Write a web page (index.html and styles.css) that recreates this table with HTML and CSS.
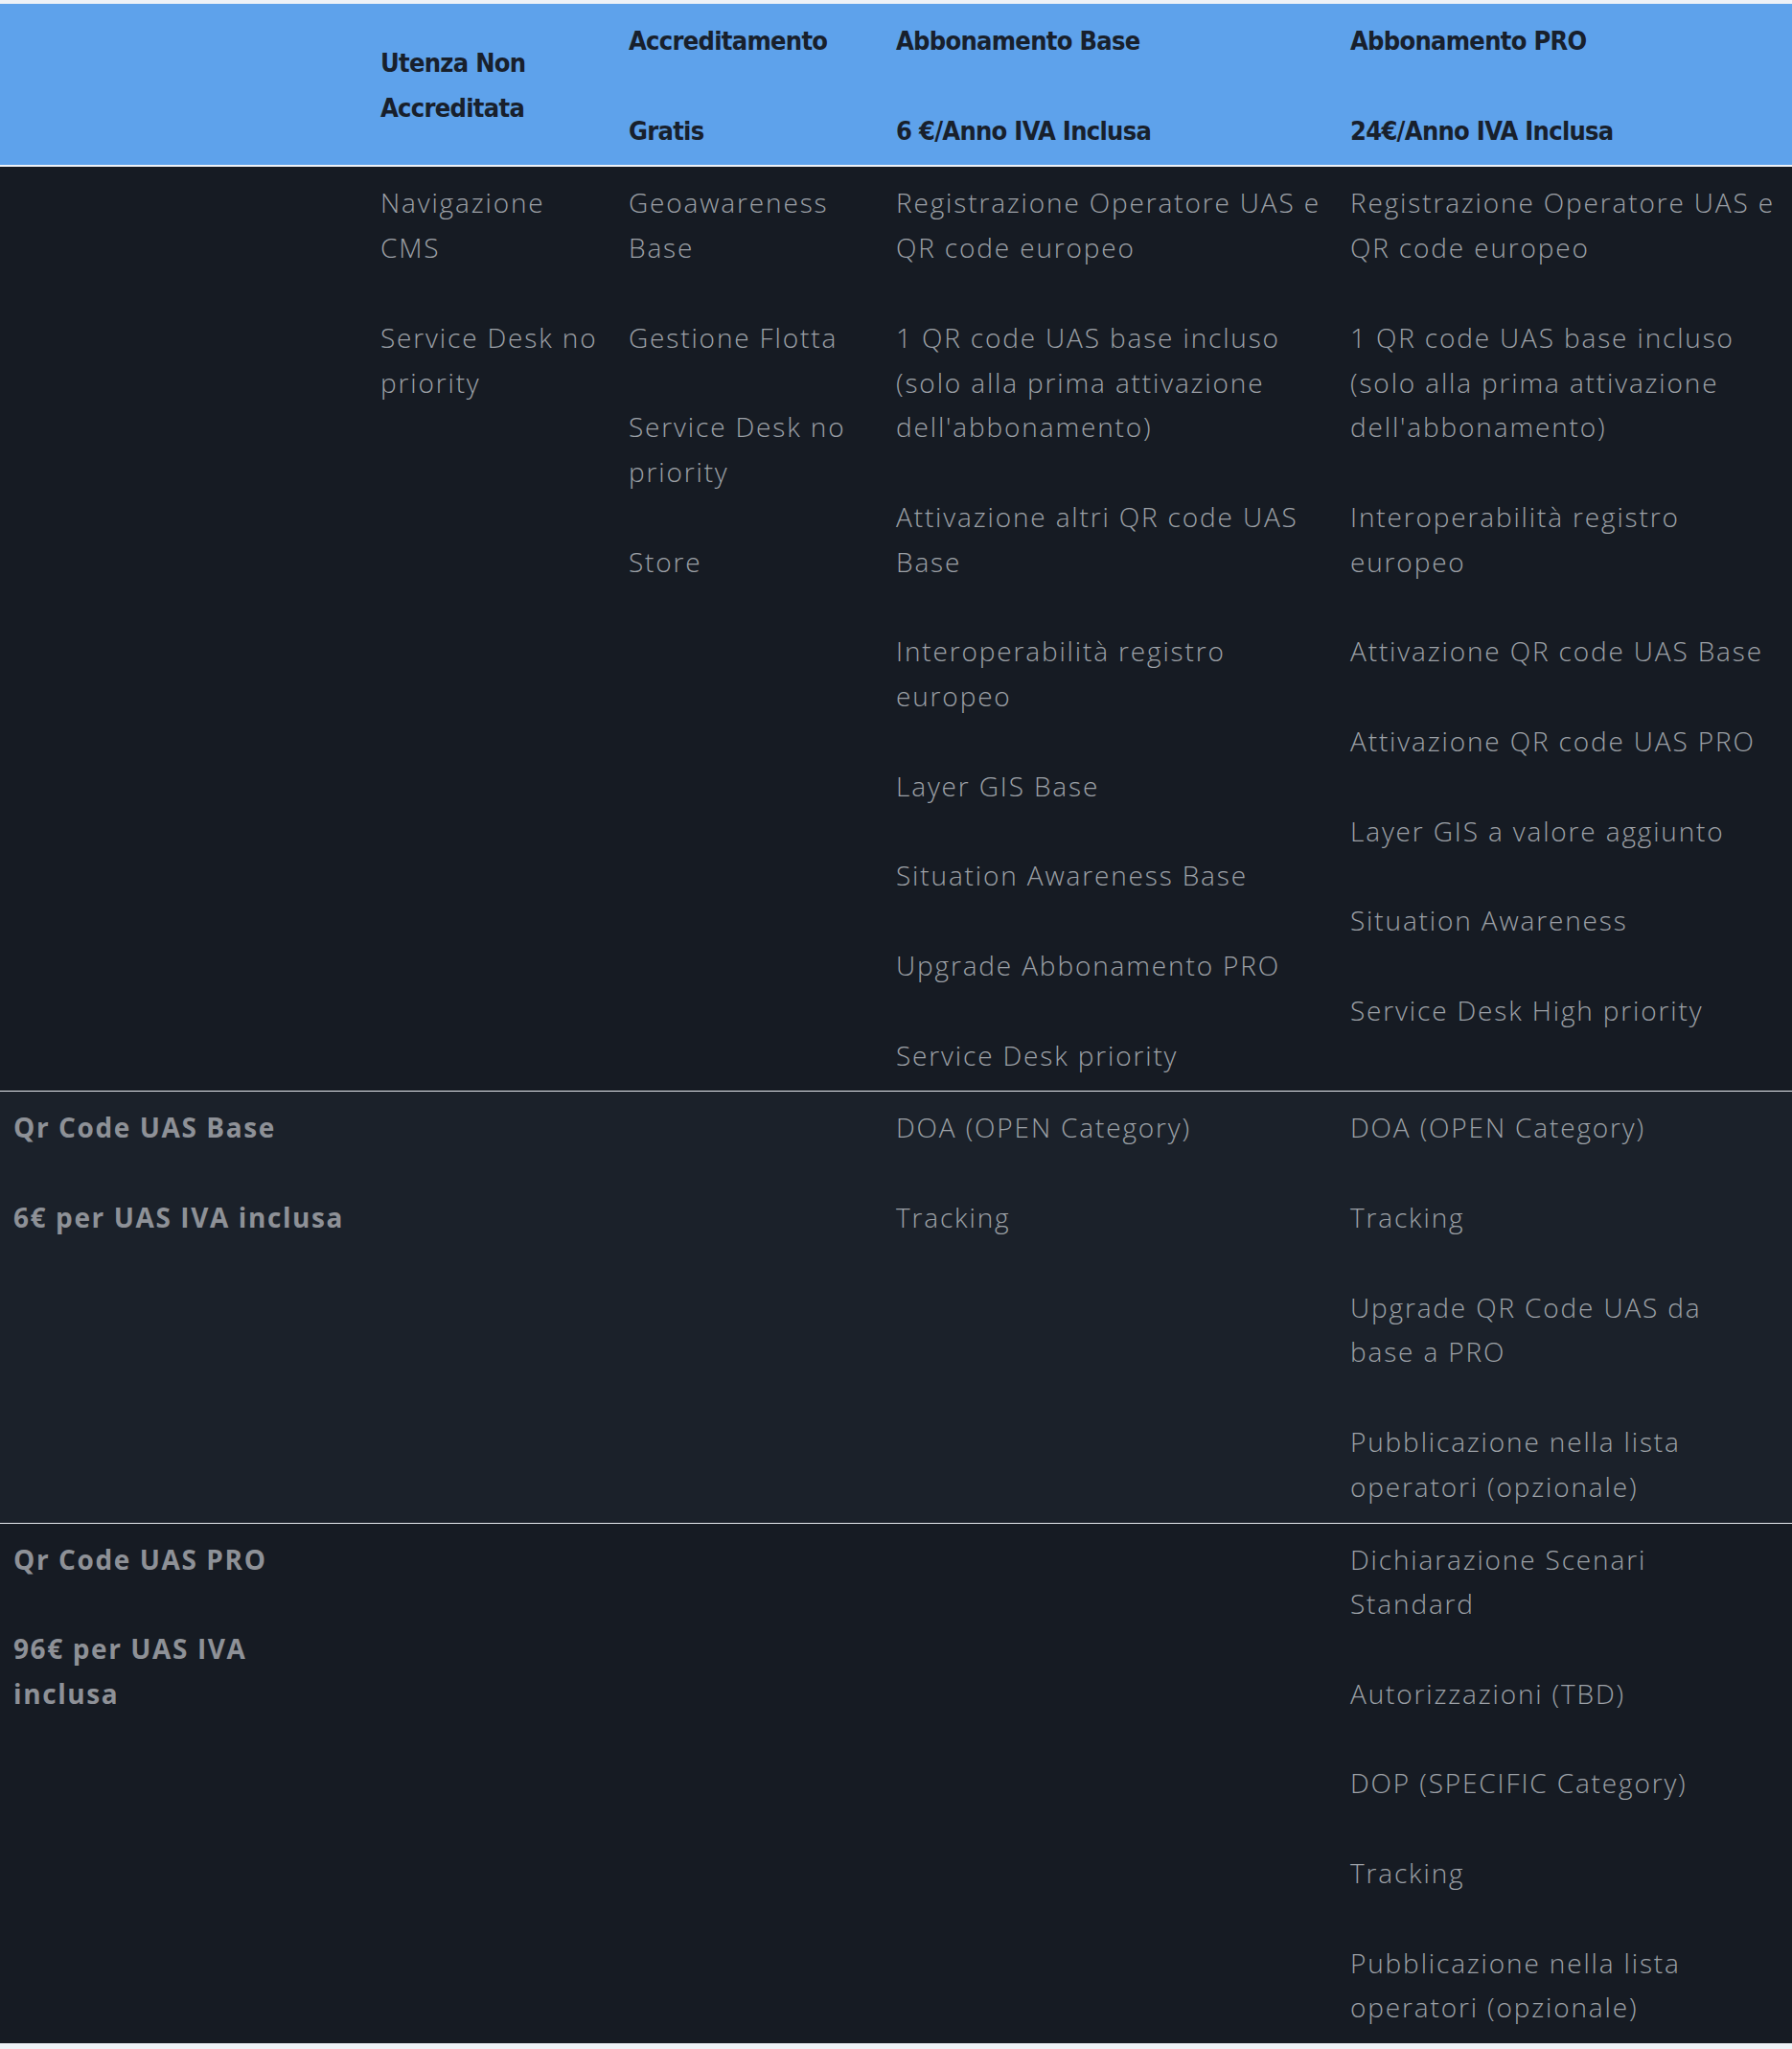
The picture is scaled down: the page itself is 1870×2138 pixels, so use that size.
FILE: index.html
```html
<!DOCTYPE html>
<html lang="it">
<head>
    <meta charset="UTF-8">
    <meta name="viewport" content="width=device-width, initial-scale=1.0">
    <title>Piani e abbonamenti</title>
    <link rel="stylesheet" href="styles.css">
</head>
<body>
    <table class="plans">
        <colgroup>
            <col class="c-label">
            <col class="c-free">
            <col class="c-acc">
            <col class="c-base">
            <col class="c-pro">
        </colgroup>
        <thead>
            <tr>
                <th></th>
                <th>Utenza Non Accreditata</th>
                <th><span class="plan">Accreditamento</span><span class="price">Gratis</span></th>
                <th><span class="plan">Abbonamento Base</span><span class="price">6 €/Anno IVA Inclusa</span></th>
                <th><span class="plan">Abbonamento PRO</span><span class="price">24€/Anno IVA Inclusa</span></th>
            </tr>
        </thead>
        <tbody>
            <!-- riga servizi -->
            <tr>
                <td></td>
                <td>
                    <p>Navigazione CMS</p>
                    <p>Service Desk no priority</p>
                </td>
                <td>
                    <p>Geoawareness Base</p>
                    <p>Gestione Flotta</p>
                    <p>Service Desk no priority</p>
                    <p>Store</p>
                </td>
                <td>
                    <p>Registrazione Operatore UAS e QR code europeo</p>
                    <p>1 QR code UAS base incluso (solo alla prima attivazione dell'abbonamento)</p>
                    <p>Attivazione altri QR code UAS Base</p>
                    <p>Interoperabilità registro europeo</p>
                    <p>Layer GIS Base</p>
                    <p>Situation Awareness Base</p>
                    <p>Upgrade Abbonamento PRO</p>
                    <p>Service Desk priority</p>
                </td>
                <td>
                    <p>Registrazione Operatore UAS e QR code europeo</p>
                    <p>1 QR code UAS base incluso (solo alla prima attivazione dell'abbonamento)</p>
                    <p>Interoperabilità registro europeo</p>
                    <p>Attivazione QR code UAS Base</p>
                    <p>Attivazione QR code UAS PRO</p>
                    <p>Layer GIS a valore aggiunto</p>
                    <p>Situation Awareness</p>
                    <p>Service Desk High priority</p>
                </td>
            </tr>
            <!-- riga qr code base -->
            <tr>
                <td class="label">
                    <p>Qr Code UAS Base</p>
                    <p>6€ per UAS IVA inclusa</p>
                </td>
                <td></td>
                <td></td>
                <td>
                    <p>DOA (OPEN Category)</p>
                    <p>Tracking</p>
                </td>
                <td>
                    <p>DOA (OPEN Category)</p>
                    <p>Tracking</p>
                    <p>Upgrade QR Code UAS da base&nbsp;a PRO</p>
                    <p>Pubblicazione nella lista operatori (opzionale)</p>
                </td>
            </tr>
            <!-- riga qr code pro -->
            <tr>
                <td class="label">
                    <p>Qr Code UAS PRO</p>
                    <p>96€ per UAS IVA inclusa</p>
                </td>
                <td></td>
                <td></td>
                <td></td>
                <td>
                    <p>Dichiarazione Scenari Standard</p>
                    <p>Autorizzazioni (TBD)</p>
                    <p>DOP (SPECIFIC Category)</p>
                    <p>Tracking</p>
                    <p>Pubblicazione nella lista operatori (opzionale)</p>
                </td>
            </tr>
        </tbody>
    </table>
</body>
</html>
```

FILE: styles.css
```css
/* impostazioni pagina */
html,body{
    margin: 0;
    background-color: #eef2f7;
}
body{
    padding: 4px 0 3px;
}
.plans{
    width: 100%;
    border-collapse: collapse;
    table-layout: fixed;
    font-family: "Open Sans", Inter, sans-serif;
    font-weight: 300;
    font-size: 28px;
    line-height: 46.8px;
    letter-spacing: 1.85px;
    color: #9da1a7;
}
.c-label{ width: 383px; }
.c-free{ width: 259px; }
.c-acc{ width: 279px; }
.c-base{ width: 474px; }
.c-pro{ width: 475px; }

th,td{
    padding: 14px 14px;
    text-align: left;
}
/* intestazione blu */
thead th{
    padding: 16px 14px 12px;
    background-color: #5ea2eb;
    color: #18202c;
    font-family: "DejaVu Sans Condensed", "DejaVu Sans", sans-serif;
    font-weight: 700;
    font-size: 27px;
    letter-spacing: -0.7px;
    vertical-align: middle;
    border-bottom: 2px solid #eef2f7;
}
.plan,.price{
    display: block;
}
.price{
    margin-top: 46.8px;
}
tbody td{
    vertical-align: top;
}
tbody tr{
    background-color: #161b23;
    border-bottom: 1px solid #e6e9ee;
}
tbody tr:nth-child(2){
    background-color: #1b212a;
}
tbody tr:last-child{
    border-bottom: none;
}
td p{
    margin: 0 0 46.8px;
}
td p:last-child{
    margin-bottom: 0;
}
.label{
    font-weight: 700;
    letter-spacing: 1.6px;
    color: #8e9197;
}
```
